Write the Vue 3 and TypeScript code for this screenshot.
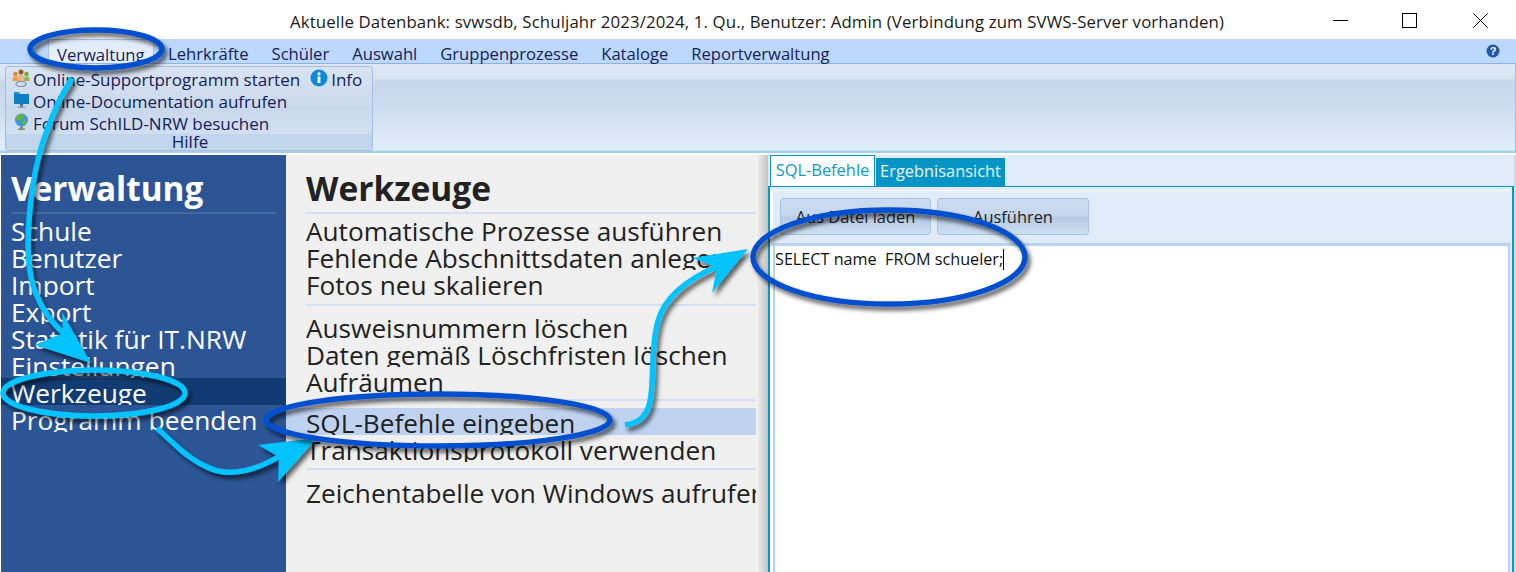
<script setup lang="ts">
const menu: string[] = ['Lehrkräfte', 'Schüler', 'Auswahl', 'Gruppenprozesse', 'Kataloge', 'Reportverwaltung']
const nav: string[] = ['Schule', 'Benutzer', 'Import', 'Export', 'Statistik für IT.NRW', 'Einstellungen', 'Werkzeuge', 'Programm beenden']
const groups: string[][] = [
  ['Automatische Prozesse ausführen', 'Fehlende Abschnittsdaten anlegen', 'Fotos neu skalieren'],
  ['Ausweisnummern löschen', 'Daten gemäß Löschfristen löschen', 'Aufräumen'],
  ['SQL-Befehle eingeben', 'Transaktionsprotokoll verwenden'],
  ['Zeichentabelle von Windows aufrufen'],
]
</script>

<template>
  <div class="app">
    <header class="titlebar">
      <div class="title">Aktuelle Datenbank: svwsdb, Schuljahr 2023/2024, 1. Qu., Benutzer: Admin (Verbindung zum SVWS-Server vorhanden)</div>
      <div class="winbtns">
        <svg width="15" height="15" viewBox="0 0 15 15"><path d="M0 7.500H15" stroke="#000" fill="none"/></svg>
        <svg width="15" height="15" viewBox="0 0 15 15"><rect x="0.5" y="0.5" width="14" height="14" stroke="#000" fill="none"/></svg>
        <svg width="15" height="15" viewBox="0 0 15 15"><path d="M0.3 0.300L14.700 14.700M14.700 0.300L0.300 14.700" stroke="#000" fill="none"/></svg>
      </div>
    </header>
    <nav class="menubar">
      <span class="tab active">Verwaltung</span>
      <span v-for="m in menu" :key="m" class="tab">{{ m }}</span>
      <svg class="help" width="14" height="14" viewBox="0 0 14 14">
        <circle cx="7" cy="7" r="6.500" fill="#2456a8"/>
        <text x="7" y="11" text-anchor="middle" class="helpq">?</text>
      </svg>
    </nav>
    <section class="ribbon">
      <div class="rgroup">
        <div class="rbody">
          <div class="rrow">
            <svg class="ricon" width="18" height="18" viewBox="0 0 18 18">
              <circle cx="3.500" cy="5" r="2.300" fill="#e8862a"/><circle cx="14.500" cy="5" r="2.300" fill="#6fae3c"/><circle cx="9" cy="3" r="2.500" fill="#9c5a26"/>
              <path d="M0.500 12V9.500C0.500 8 2 7.500 3.500 7.500S6 8 6 9.500V12z" fill="#ef9a3c"/>
              <path d="M12 12V9.500C12 8 13 7.500 14.500 7.500S17.500 8 17.500 9.500V12z" fill="#86bc4a"/>
              <path d="M5.500 13V8.500C5.500 6.500 7 6 9 6s3.500.5 3.500 2.500V13z" fill="#e9b48a"/>
              <ellipse cx="9" cy="15" rx="5" ry="2.500" fill="none" stroke="#7d8fa8" stroke-width="1.200"/>
            </svg>
            <span>Online-Supportprogramm starten</span>
            <svg class="info" width="18" height="18" viewBox="0 0 18 18">
              <circle cx="9" cy="9" r="8.500" fill="#0e8ad6"/><rect x="7.600" y="7.500" width="2.800" height="6.500" fill="#fff"/><circle cx="9" cy="4.800" r="1.600" fill="#fff"/>
            </svg>
            <span>Info</span>
          </div>
          <div class="rrow">
            <svg class="ricon" width="18" height="18" viewBox="0 0 18 18">
              <path d="M2 1H7L8 3H17V13H2z" fill="#1a95d8"/><path d="M2 3H17V13H2z" fill="#0f7fc4"/>
              <rect x="8" y="13" width="3" height="2.500" fill="#5a6a78"/><rect x="6" y="15.500" width="7" height="1.500" fill="#8d98a3"/>
            </svg>
            <span>Online-Documentation aufrufen</span>
          </div>
          <div class="rrow">
            <svg class="ricon" width="18" height="18" viewBox="0 0 18 18">
              <circle cx="9.500" cy="7" r="6.500" fill="#3a9ad9"/>
              <path d="M5 2.500L9 1l3 2-2 3-3 1.500-1-1-3 .5zM10 8l4.500-1.500L14 10.500l-3 2.500z" fill="#6db52e"/>
              <path d="M8 13.500h3v2H8zM6 15.500h7V17H6z" fill="#7c8a6a"/>
            </svg>
            <span>Forum SchILD-NRW besuchen</span>
          </div>
        </div>
        <div class="rcaption">Hilfe</div>
      </div>
    </section>
    <main class="main">
      <aside class="side">
        <h1 class="sidehead">Verwaltung</h1>
        <div class="navlist">
          <div v-for="n in nav" :key="n" class="navitem" :class="{ sel: n === 'Werkzeuge' }">{{ n }}</div>
        </div>
      </aside>
      <section class="mid">
        <h2 class="midhead">Werkzeuge</h2>
        <div v-for="(g, i) in groups" :key="i" class="grp" :class="'grp' + i">
          <div v-for="t in g" :key="t" class="miditem" :class="{ sel: t === 'SQL-Befehle eingeben' }">{{ t }}</div>
        </div>
      </section>
      <div class="split"></div>
      <section class="right">
        <div class="tabs">
          <span class="rtab on">SQL-Befehle</span>
          <span class="rtab off">Ergebnisansicht</span>
        </div>
        <div class="panel">
          <div class="tools">
            <button class="btn b1">Aus Datei laden</button>
            <button class="btn b2">Ausführen</button>
          </div>
          <div class="editor">SELECT name&nbsp; FROM schueler;<span class="caret"></span></div>
        </div>
      </section>
    </main>

    <svg class="annot" width="1516" height="572" viewBox="0 0 1516 572">
      <defs>
        <filter id="sh" x="-20%" y="-20%" width="140%" height="150%">
          <feDropShadow dx="3" dy="4" stdDeviation="2.200" flood-color="#000" flood-opacity="0.6"/>
        </filter>
      </defs>
      <g filter="url(#sh)">
        <path d="M72 78C52 110 38 150 33 185C27 225 25 270 37 296C45 315 56 328 70 338" fill="none" stroke="#00c3ff" stroke-width="5.500"/>
        <path d="M91 363L62 312L63 333L35 345Z" fill="#00c3ff"/>
      </g>
      <g filter="url(#sh)">
        <path d="M157 428C175 445 188 458 205 466C225 477 250 474 282 455" fill="none" stroke="#00c3ff" stroke-width="5.500"/>
        <path d="M317 438L258 445L279 457L278 482Z" fill="#00c3ff"/>
      </g>
      <g filter="url(#sh)">
        <path d="M625 425C640 423 649 415 651 395C654 372 651 345 658 321C665 296 690 278 718 266" fill="none" stroke="#00c3ff" stroke-width="5.500"/>
        <path d="M748 249L692 258L717 267L712 293Z" fill="#00c3ff"/>
      </g>
      <g filter="url(#sh)" fill="none">
        <ellipse cx="96" cy="49" rx="66" ry="19" stroke="#0450cf" stroke-width="5.500"/>
        <ellipse cx="94" cy="393" rx="91" ry="23" stroke="#00c3ff" stroke-width="5.500"/>
        <ellipse cx="438" cy="420" rx="172" ry="26" stroke="#0450cf" stroke-width="5.500"/>
        <ellipse cx="889" cy="257" rx="136" ry="47" stroke="#0450cf" stroke-width="5.500"/>
      </g>
    </svg>
  </div>
</template>

<style>
html, body { margin: 0; padding: 0; background: #fff; overflow: hidden; }
</style>

<style scoped>
.app {
  position: relative;
  width: 1516px;
  height: 572px;
  overflow: hidden;
  font-family: "Open Sans", "Noto Sans", sans-serif;
  background: #fff;
}
.titlebar {
  height: 39px;
  display: flex;
  align-items: center;
  position: relative;
  background: #fff;
}
.title {
  margin-left: 290px;
  font-size: 16.8px;
  color: #1a1a1a;
  white-space: nowrap;
  letter-spacing: 0.13px;
  padding-top: 3px;
}
.winbtns {
  position: absolute;
  top: 13px;
  left: 1333px;
  display: flex;
  gap: 54px;
}
.winbtns svg { display: block; }
.winbtns svg:last-child { margin-left: 2px; }
.menubar {
  height: 24px;
  background: #bcd8fc;
  display: flex;
  align-items: flex-end;
  padding-left: 48px;
  position: relative;
  color: #14205f;
  font-size: 16.6px;
}
.tab {
  height: 24px;
  line-height: 30px;
  padding: 0 11.500px;
  white-space: nowrap;
}
.tab.active {
  padding: 0 8px;
  background: linear-gradient(#dfeafa, #e9f2fd);
  border: 1px solid #a9c6ea;
  border-bottom: none;
  box-sizing: border-box;
  border-radius: 2px 2px 0 0;
  margin-right: 3px;
}
.help { position: absolute; top: 5px; left: 1486px; }
.helpq { font-size: 11px; font-weight: 700; fill: #fff; font-family: "Liberation Sans", sans-serif; }
.ribbon {
  height: 90px;
  box-sizing: border-box;
  background: linear-gradient(#dce6f4 0, #dce6f4 4%, #d9e3f2 16%, #c6d7eb 20%, #cddcee 50%, #e2effc 100%);
  border-top: 1px solid #8fb2e0;
  border-bottom: 2px solid #a9cfe8;
  border-right: 1px solid #9dc0ea;
  padding: 2px 0 0 5px;
  box-shadow: inset 0 -1px 0 #b5eef0;
}
.rgroup {
  width: 368px;
  height: 85px;
  box-sizing: border-box;
  border: 1px solid #a7bfdc;
  border-radius: 3px;
  background: linear-gradient(#d9e4f3, #c9d9ec 50%, #d6e4f4);
  color: #14205f;
  font-size: 17px;
  display: flex;
  flex-direction: column;
}
.rbody { flex: 1; padding-top: 1px; }
.rrow {
  height: 22px;
  display: flex;
  align-items: center;
  padding-left: 6px;
  white-space: nowrap;
}
.ricon { margin-right: 3px; margin-top: -2px; flex: none; }
.info { margin-left: 10px; margin-right: 3px; margin-top: -2px; flex: none; }
.rcaption {
  height: 16px;
  background: #c1d5ec;
  text-align: center;
  line-height: 16px;
  font-size: 17px;
  padding-left: 2px;
  border-radius: 0 0 3px 3px;
}
.main {
  height: 417px;
  margin-top: 2px;
  margin-left: 1px;
  display: flex;
  background: #e1ecfb;
}
.side {
  width: 285px;
  flex: none;
  background: #2c5596;
  color: #fff;
  padding-top: 12px;
  box-sizing: border-box;
}
.sidehead {
  margin: 0 10px;
  height: 47px;
  box-sizing: border-box;
  font-size: 33.300px;
  line-height: 43px;
  font-weight: 700;
  border-bottom: 2px solid #44699f;
  white-space: nowrap;
}
.navlist { padding-top: 2px; }
.navitem {
  height: 27px;
  line-height: 31px;
  font-size: 26.300px;
  padding-left: 10px;
  white-space: nowrap;
  overflow: hidden;
}
.navitem.sel { background: #113c73; }
.mid {
  width: 470px;
  flex: none;
  background: #f0f0f0;
  color: #222;
  padding-top: 12px;
  box-sizing: border-box;
  overflow: hidden;
}
.midhead {
  margin: 0 0 0 20px;
  height: 47px;
  box-sizing: border-box;
  font-size: 33.500px;
  line-height: 43px;
  font-weight: 700;
  border-bottom: 2px solid #d5e1f3;
  white-space: nowrap;
}
.grp {
  margin-left: 20px;
  border-bottom: 2px solid #d5e1f3;
}
.grp0 { padding: 2px 0 7px; }
.grp1 { padding: 7px 0 5px; }
.grp2 { padding: 7px 0 6px; }
.grp3 { padding: 8px 0 0; border-bottom: none; }
.miditem {
  height: 27px;
  line-height: 31px;
  font-size: 26.200px;
  white-space: nowrap;
  overflow: hidden;
}
.miditem.sel { background: #bfd3f1; margin-left: -20px; padding-left: 20px; }
.split {
  width: 12px;
  flex: none;
  background: linear-gradient(90deg, #fafafa, #ededed 12%, #dcdcdc 50%, #c2c2c2);
}
.right {
  flex: 1;
  background: #e1ecfb;
  display: flex;
  flex-direction: column;
  min-width: 0;
  box-shadow: inset -2px 0 0 #d8d8d8;
}
.tabs {
  height: 31px;
  display: flex;
  align-items: flex-end;
  padding-left: 2px;
  gap: 1px;
  flex: none;
}
.rtab {
  white-space: nowrap;
  font-size: 16.400px;
  box-sizing: border-box;
}
.rtab.on {
  height: 31px;
  width: 105px;
  background: #fff;
  color: #0b9ac9;
  border: 1px solid #0a96c6;
  border-bottom: none;
  text-align: center;
  line-height: 27px;
}
.rtab.off {
  height: 28px;
  width: 129px;
  background: #0795c6;
  color: #e8f6fb;
  text-align: center;
  line-height: 26px;
}
.panel {
  flex: 1;
  margin-right: 2px;
  border: 1px solid #0a96c6;
  border-left-width: 2px;
  border-right-width: 2px;
  border-bottom: none;
  padding: 3px 2px 0 0;
  display: flex;
  flex-direction: column;
  min-height: 0;
  background: #e1ecfb;
  box-sizing: border-box;
}
.tools {
  height: 56px;
  flex: none;
  display: flex;
  gap: 6px;
  padding: 7px 0 0 7px;
  box-sizing: border-box;
  border-top: 1px solid #fff;
  border-left: 3px solid #fff;
  border-bottom: 3px solid #bad3ee;
}
.btn {
  height: 37px;
  box-sizing: border-box;
  border: 1px solid #a9c1e2;
  border-radius: 3px;
  background: linear-gradient(#cbdcf2, #c5d8ef 45%, #b6cbe4 55%, #cfe0f4);
  font: 16.400px "Open Sans", "Noto Sans", sans-serif;
  color: #222;
  padding: 0;
}
.b1 { width: 151px; }
.b2 { width: 152px; }
.editor {
  flex: 1;
  background: #fff;
  padding: 1px 0 0 0;
  font-size: 16.200px;
  line-height: 24px;
  color: #111;
  white-space: nowrap;
  border-left: 2px solid #b5d3ee;
  border-right: 2px solid #b5d3ee;
  margin-left: 3px;
  box-shadow: -3px 0 0 #fff;
}
.caret {
  display: inline-block;
  width: 1px;
  height: 21px;
  background: #000;
  vertical-align: -5px;
}
.annot {
  position: absolute;
  top: 0;
  left: 0;
  pointer-events: none;
}
</style>
